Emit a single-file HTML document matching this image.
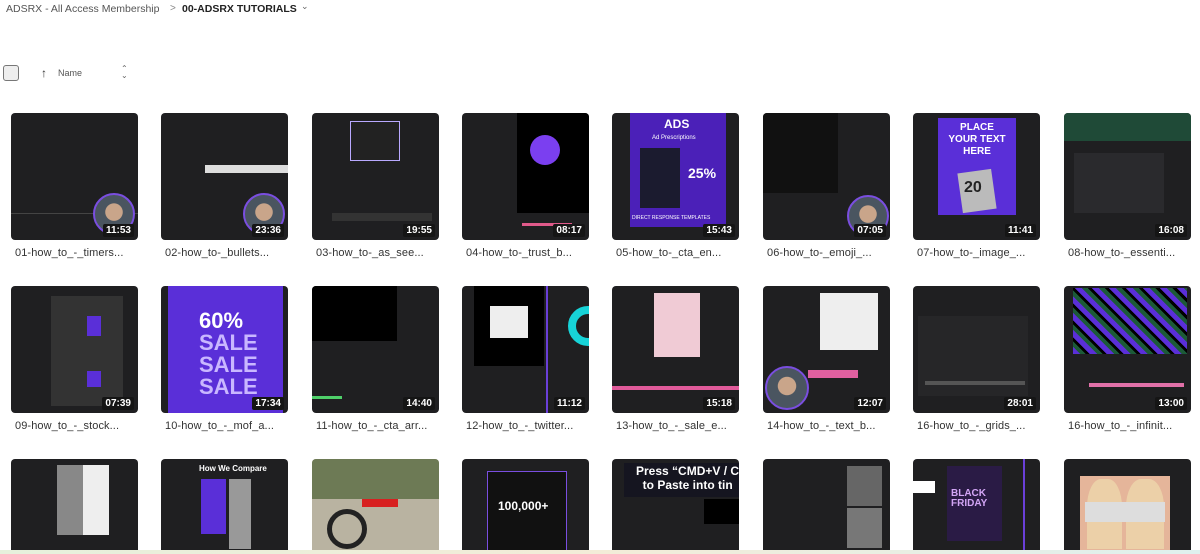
<!DOCTYPE html>
<html><head><meta charset="utf-8"><style>
*{margin:0;padding:0;box-sizing:border-box}
html{width:1200px;height:554px;overflow:hidden}
body{width:1200px;height:554px;overflow:hidden;background:#fff;font-family:"Liberation Sans",sans-serif;position:relative}
.a{position:absolute}
.t{position:absolute;width:127px;height:127px;background:#1f1f21;border-radius:4px;overflow:hidden}
.r3{height:95px;border-radius:4px 4px 0 0}
.d{position:absolute;right:4px;bottom:3px;background:#151515;color:#fff;font-size:10px;font-weight:bold;padding:1px 3px;border-radius:2px}
.l{position:absolute;font-size:11px;color:#333;letter-spacing:.1px}
.av{position:absolute;width:42px;height:42px;border-radius:50%;border:2px solid #7a4ee0;background:radial-gradient(circle at 50% 45%,#c9a58a 0 30%,#4a5560 32% 100%)}
.g{position:absolute;background:#2b2b2e}
.p{position:absolute;background:#5a2fd8}
</style></head><body>
<div class="a" style="left:6px;top:3px;font-size:10.5px;color:#555;white-space:nowrap">ADSRX - All Access Membership</div>
<div class="a" style="left:170px;top:3px;font-size:10px;color:#888">&gt;</div>
<div class="a" style="left:182px;top:3px;font-size:10.5px;color:#222;font-weight:bold;white-space:nowrap">00-ADSRX TUTORIALS</div>
<div class="a" style="left:301px;top:1px;font-size:9px;color:#666">&#8964;</div>
<div class="a" style="left:3px;top:65px;width:16px;height:16px;border:1.5px solid #777;border-radius:3px;background:#eee"></div>
<div class="a" style="left:41px;top:66px;font-size:12px;color:#333">&#8593;</div>
<div class="a" style="left:58px;top:68px;font-size:9px;color:#555">Name</div>
<div class="a" style="left:121px;top:65px;font-size:8px;color:#666;line-height:7px">&#8963;<br>&#8964;</div>

<!-- Row 1 -->
<div class="t" style="left:11px;top:113px"><div class="g" style="left:0;top:100px;width:127px;height:1px;background:#444"></div><div class="av" style="left:82px;top:80px"></div><div class="d">11:53</div></div>
<div class="t" style="left:161px;top:113px"><div class="a" style="left:44px;top:52px;width:83px;height:8px;background:#ddd"></div><div class="av" style="left:82px;top:80px"></div><div class="d">23:36</div></div>
<div class="t" style="left:312px;top:113px"><div class="a" style="left:38px;top:8px;width:50px;height:40px;border:1px solid #b9a9ff;background:#222"></div><div class="a" style="left:20px;top:100px;width:100px;height:8px;background:#333"></div><div class="d">19:55</div></div>
<div class="t" style="left:462px;top:113px"><div class="a" style="left:55px;top:0;width:72px;height:100px;background:#000"></div><div class="a" style="left:68px;top:22px;width:30px;height:30px;border-radius:50%;background:#7b3ff0"></div><div class="a" style="left:60px;top:110px;width:50px;height:3px;background:#e05a8a"></div><div class="d">08:17</div></div>
<div class="t" style="left:612px;top:113px"><div class="p" style="left:18px;top:0;width:96px;height:114px;background:#4b20b8"></div><div class="a" style="left:52px;top:4px;color:#fff;font-weight:bold;font-size:12px">ADS</div><div class="a" style="left:40px;top:22px;color:#fff;font-size:6px">Ad Prescriptions</div><div class="a" style="left:28px;top:35px;width:40px;height:60px;background:#1b1b2f"></div><div class="a" style="left:76px;top:52px;color:#fff;font-weight:bold;font-size:14px">25%</div><div class="a" style="left:20px;top:102px;color:#fff;font-size:5px">DIRECT RESPONSE TEMPLATES</div><div class="d">15:43</div></div>
<div class="t" style="left:763px;top:113px"><div class="a" style="left:0;top:0;width:75px;height:80px;background:#111"></div><div class="av" style="left:84px;top:82px"></div><div class="d">07:05</div></div>
<div class="t" style="left:913px;top:113px"><div class="p" style="left:25px;top:5px;width:78px;height:97px"></div><div class="a" style="left:25px;top:9px;width:78px;text-align:center;color:#fff;font-weight:bold;font-size:10px;line-height:12px">PLACE<br>YOUR TEXT<br>HERE</div><div class="a" style="left:47px;top:58px;width:34px;height:40px;background:#bbb;transform:rotate(-8deg)"></div><div class="a" style="left:51px;top:66px;font-size:16px;font-weight:bold;color:#222">20</div><div class="d">11:41</div></div>
<div class="t" style="left:1064px;top:113px"><div class="a" style="left:0;top:0;width:127px;height:28px;background:#1f4a37"></div><div class="a" style="left:10px;top:40px;width:90px;height:60px;background:#2a2a2d"></div><div class="d">16:08</div></div>
<div class="l" style="left:15px;top:247px">01-how_to_-_timers...</div>
<div class="l" style="left:165px;top:247px">02-how_to-_bullets...</div>
<div class="l" style="left:316px;top:247px">03-how_to-_as_see...</div>
<div class="l" style="left:466px;top:247px">04-how_to-_trust_b...</div>
<div class="l" style="left:616px;top:247px">05-how_to-_cta_en...</div>
<div class="l" style="left:767px;top:247px">06-how_to-_emoji_...</div>
<div class="l" style="left:917px;top:247px">07-how_to-_image_...</div>
<div class="l" style="left:1068px;top:247px">08-how_to-_essenti...</div>

<!-- Row 2 -->
<div class="t" style="left:11px;top:286px"><div class="a" style="left:40px;top:10px;width:72px;height:110px;background:#333"></div><div class="a" style="left:76px;top:30px;width:14px;height:20px;background:#5a2fd8"></div><div class="a" style="left:76px;top:85px;width:14px;height:16px;background:#5a2fd8"></div><div class="d">07:39</div></div>
<div class="t" style="left:161px;top:286px"><div class="p" style="left:7px;top:0;width:115px;height:127px"></div><div class="a" style="left:38px;top:24px;color:#fff;font-weight:bold;font-size:22px;line-height:22px;text-align:left">60%<br><span style="color:#c9b7ff">SALE<br>SALE<br>SALE</span></div><div class="d">17:34</div></div>
<div class="t" style="left:312px;top:286px"><div class="a" style="left:0;top:0;width:85px;height:55px;background:#000"></div><div class="a" style="left:0;top:110px;width:30px;height:3px;background:#4fd06a"></div><div class="d">14:40</div></div>
<div class="t" style="left:462px;top:286px"><div class="a" style="left:12px;top:0;width:70px;height:80px;background:#000"></div><div class="a" style="left:28px;top:20px;width:38px;height:32px;background:#eee"></div><div class="a" style="left:106px;top:20px;width:40px;height:40px;border-radius:50%;border:8px solid #17d3d8"></div><div class="a" style="left:84px;top:0;width:2px;height:127px;background:#6a3fd8"></div><div class="d">11:12</div></div>
<div class="t" style="left:612px;top:286px"><div class="a" style="left:42px;top:7px;width:46px;height:64px;background:#f0cbd5"></div><div class="a" style="left:0;top:100px;width:127px;height:4px;background:#e05a9a"></div><div class="d">15:18</div></div>
<div class="t" style="left:763px;top:286px"><div class="a" style="left:57px;top:7px;width:58px;height:57px;background:#eee"></div><div class="a" style="left:45px;top:84px;width:50px;height:8px;background:#e060a0"></div><div class="av" style="left:2px;top:80px;width:44px;height:44px"></div><div class="d">12:07</div></div>
<div class="t" style="left:913px;top:286px"><div class="a" style="left:5px;top:30px;width:110px;height:80px;background:#262628"></div><div class="a" style="left:12px;top:95px;width:100px;height:4px;background:#555"></div><div class="d">28:01</div></div>
<div class="t" style="left:1064px;top:286px"><div class="a" style="left:9px;top:2px;width:114px;height:66px;background:repeating-linear-gradient(45deg,#5a2fd8 0 5px,#1c5a38 5px 9px,#000 9px 12px)"></div><div class="a" style="left:25px;top:97px;width:95px;height:4px;background:#e070a8"></div><div class="d">13:00</div></div>
<div class="l" style="left:15px;top:420px">09-how_to_-_stock...</div>
<div class="l" style="left:165px;top:420px">10-how_to_-_mof_a...</div>
<div class="l" style="left:316px;top:420px">11-how_to_-_cta_arr...</div>
<div class="l" style="left:466px;top:420px">12-how_to_-_twitter...</div>
<div class="l" style="left:616px;top:420px">13-how_to_-_sale_e...</div>
<div class="l" style="left:767px;top:420px">14-how_to_-_text_b...</div>
<div class="l" style="left:917px;top:420px">16-how_to_-_grids_...</div>
<div class="l" style="left:1068px;top:420px">16-how_to_-_infinit...</div>

<!-- Row 3 -->
<div class="t r3" style="left:11px;top:459px"><div class="a" style="left:46px;top:6px;width:26px;height:70px;background:#888"></div><div class="a" style="left:72px;top:6px;width:26px;height:70px;background:#eee"></div></div>
<div class="t r3" style="left:161px;top:459px"><div class="a" style="left:38px;top:5px;color:#fff;font-weight:bold;font-size:8px">How We Compare</div><div class="a" style="left:40px;top:20px;width:25px;height:55px;background:#5a2fd8"></div><div class="a" style="left:68px;top:20px;width:22px;height:70px;background:#999"></div></div>
<div class="t r3" style="left:312px;top:459px;background:#b9b3a1"><div class="a" style="left:0;top:0;width:127px;height:40px;background:#6d7a55"></div><div class="a" style="left:50px;top:40px;width:36px;height:8px;background:#d82020"></div><div class="a" style="left:15px;top:50px;width:40px;height:40px;border:5px solid #222;border-radius:50%"></div></div>
<div class="t r3" style="left:462px;top:459px"><div class="a" style="left:25px;top:12px;width:80px;height:110px;border:1px solid #7a4ee0;background:#111"></div><div class="a" style="left:36px;top:40px;color:#fff;font-weight:bold;font-size:12px">100,000+</div></div>
<div class="t r3" style="left:612px;top:459px"><div class="a" style="left:12px;top:4px;width:115px;height:34px;background:#151520"></div><div class="a" style="left:24px;top:5px;color:#fff;font-weight:bold;font-size:12px;line-height:14px;white-space:nowrap">Press “CMD+V / C<br>&nbsp;&nbsp;to Paste into tin</div><div class="a" style="left:92px;top:40px;width:35px;height:25px;background:#000"></div></div>
<div class="t r3" style="left:763px;top:459px"><div class="a" style="left:84px;top:7px;width:35px;height:40px;background:#666"></div><div class="a" style="left:84px;top:49px;width:35px;height:40px;background:#777"></div></div>
<div class="t r3" style="left:913px;top:459px"><div class="a" style="left:34px;top:7px;width:55px;height:75px;background:#2a1b45"></div><div class="a" style="left:38px;top:30px;color:#d2a5f5;font-weight:bold;font-size:10px;line-height:10px">BLACK<br>FRIDAY</div><div class="a" style="left:0;top:22px;width:22px;height:12px;background:#fff"></div><div class="a" style="left:110px;top:0;width:2px;height:95px;background:#6a3fd8"></div></div>
<div class="t r3" style="left:1064px;top:459px"><div class="a" style="left:16px;top:17px;width:90px;height:78px;background:#e5b59a"></div><div class="a" style="left:23px;top:20px;width:35px;height:70px;background:#ecd0a8;border-radius:40% 40% 0 0"></div><div class="a" style="left:62px;top:20px;width:38px;height:70px;background:#ecd0a8;border-radius:40% 40% 0 0"></div><div class="a" style="left:21px;top:43px;width:80px;height:20px;background:#ddd"></div></div>
<div class="a" style="left:0;top:550px;width:1200px;height:4px;background:linear-gradient(90deg,#e6f0dc,#f3ecd8,#dff0ee)"></div>
</body></html>
